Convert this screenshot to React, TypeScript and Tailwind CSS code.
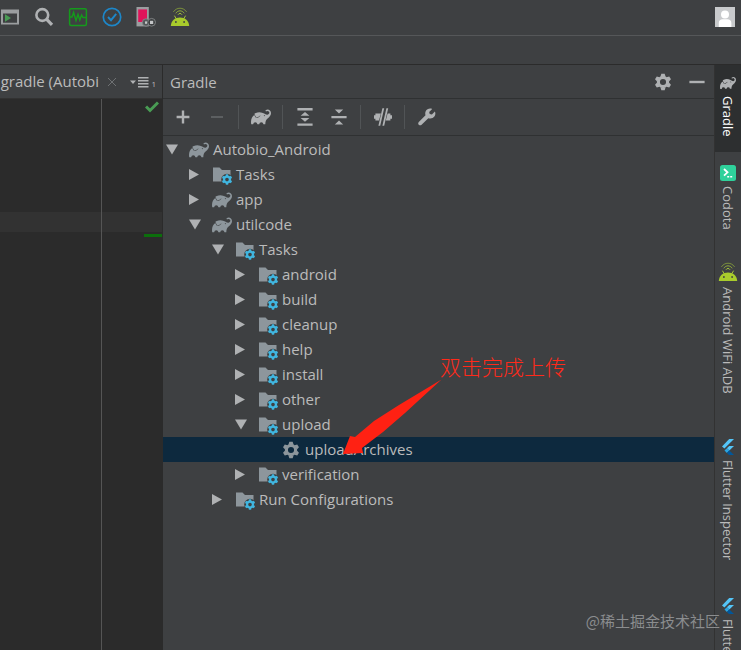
import type { ReactNode } from 'react'
import { SiGradle } from 'react-icons/si'

const TEETH = [0, 60, 120, 180, 240, 300]

function Cog({ className }: { className?: string }) {
  return (
    <svg viewBox="-10 -10 20 20" className={className} aria-hidden="true">
      <circle r="4.6" fill="none" stroke="currentColor" strokeWidth="3.1" />
      {TEETH.map((deg) => (
        <path key={deg} d="M-2.5 -5.4 L-1.7 -8.2 H1.7 L2.5 -5.4 Z" fill="currentColor" transform={`rotate(${deg})`} />
      ))}
    </svg>
  )
}

function TaskFolder() {
  return (
    <svg viewBox="0 0 20 20" className="size-5" aria-hidden="true">
      <path d="M1 2.5 H7.5 L10 5 H18.5 V16.5 H1 Z" fill="#8d969c" />
      <circle cx="15" cy="14.5" r="5.8" fill="#3e4042" />
      <g transform="translate(15 14.5)" fill="#40b6e0">
        <circle r="2.9" fill="none" stroke="#40b6e0" strokeWidth="2.2" />
        {TEETH.map((deg) => (
          <rect key={deg} x="-1.2" y="-5.2" width="2.4" height="2" transform={`rotate(${deg})`} />
        ))}
      </g>
    </svg>
  )
}

function AndroidWifi() {
  return (
    <svg viewBox="0 0 20 20" className="size-5" aria-hidden="true">
      <g fill="none" stroke="#a4c639" strokeWidth="1" strokeLinecap="round">
        <path d="M3.6 4.6 C6.5 0 13.5 0 16.4 4.6" strokeOpacity="0.6" />
        <path d="M6 6 C7.8 3 12.2 3 14 6" strokeOpacity="0.8" />
        <path d="M8.2 7.4 C9 6 11 6 11.8 7.4" />
        <path d="M4.6 9 L6.2 11.6 M15.4 9 L13.8 11.6" />
      </g>
      <path d="M0.8 19 C1 13.5 5 10.4 10 10.4 S19 13.5 19.2 19 Z" fill="#a9cc2c" />
      <circle cx="5.9" cy="15" r="0.9" fill="#3e4042" />
      <circle cx="14.1" cy="15" r="0.9" fill="#3e4042" />
    </svg>
  )
}

function FlutterLogo() {
  return (
    <svg viewBox="0 0 16 16" className="size-4" aria-hidden="true">
      <path d="M9.2 0 H14 L4.4 9.6 L2 7.4 Z" fill="#54c5f8" />
      <path d="M9.2 7 H14 L9.3 11.6 L6.9 9.3 Z" fill="#54c5f8" />
      <path d="M4.5 11.6 L6.9 9.3 L9.3 11.6 L6.9 14 Z" fill="#29a5e3" />
      <path d="M6.9 14 L9.3 11.6 L14 16 H9 Z" fill="#01579b" />
    </svg>
  )
}

function CodotaLogo() {
  return (
    <svg viewBox="0 0 16 16" className="size-4" aria-hidden="true">
      <rect width="16" height="16" rx="2.5" fill="#2fd19b" />
      <path d="M4 4 L7.5 7.3 L4 10.6" fill="none" stroke="#fff" strokeWidth="1.8" />
      <path d="M7.2 11.8 H9.2 M10.2 11.8 H12.2" stroke="#fff" strokeWidth="1.4" />
    </svg>
  )
}

function Elephant({ className }: { className?: string }) {
  return <SiGradle className={className} aria-hidden="true" />
}

function Twisty({ open }: { open: boolean }) {
  return (
    <svg viewBox="0 0 12 12" className="size-3" aria-hidden="true">
      <path d={open ? 'M0 0.5 H12 L6 10.5 Z' : 'M0 0 L10 5.5 L0 11 Z'} fill="#afb1b3" />
    </svg>
  )
}

const mainTools: { label: string; icon: ReactNode }[] = [
  {
    label: 'Run window',
    icon: (
      <svg viewBox="0 0 20 20" className="size-5">
        <path d="M1 2.5 H19 V17.5 H1 Z M3 6.5 V15.8 H17 V6.5 Z" fill="#9b9ea0" fillRule="evenodd" />
        <path d="M5 7.2 L11 11 L5 14.8 Z" fill="#499c54" />
      </svg>
    ),
  },
  {
    label: 'Search',
    icon: (
      <svg viewBox="0 0 20 20" className="size-5" fill="none" stroke="#afb1b3">
        <circle cx="8.3" cy="8" r="5.9" strokeWidth="2.6" />
        <path d="M12.5 12.2 L18 17.8" strokeWidth="3.2" />
      </svg>
    ),
  },
  {
    label: 'Monitor',
    icon: (
      <svg viewBox="0 0 20 20" className="size-5" fill="none" stroke="#159a1c">
        <rect x="1.6" y="1.8" width="16.8" height="16.6" rx="1.5" strokeWidth="1.5" />
        <path d="M2 10 H4 L5.6 5.5 L8 13.5 L10 7.5 L11.8 13 L13.6 8 L15 10.6 H18" strokeWidth="1.5" />
      </svg>
    ),
  },
  {
    label: 'Check',
    icon: (
      <svg viewBox="0 0 20 20" className="size-5" fill="none" stroke="#1d87c9">
        <circle cx="10" cy="10" r="8.7" strokeWidth="1.7" />
        <path d="M6 10 L9 13.2 L14.2 6.8" strokeWidth="1.9" />
      </svg>
    ),
  },
  {
    label: 'Device',
    icon: (
      <svg viewBox="0 0 20 20" className="size-5">
        <path d="M0.5 0 H12.8 V19.4 H0.5 Z" fill="#9b9ea0" />
        <path d="M2.2 2.4 H11 V15 H2.2 Z" fill="#e0145a" />
        <circle cx="10" cy="15.5" r="3.7" fill="#55585a" stroke="#8c8f91" strokeWidth="0.8" />
        <circle cx="15.6" cy="15.3" r="3.9" fill="#3e4042" stroke="#8c8f91" strokeWidth="0.8" />
        <rect x="14" y="13.8" width="3.2" height="3.2" fill="#c4c6c8" />
        <rect x="9" y="14.4" width="2" height="2.4" fill="#c4c6c8" />
      </svg>
    ),
  },
  { label: 'Android WiFi', icon: <AndroidWifi /> },
]

const gradleTools: { label: string; icon: ReactNode }[][] = [
  [
    {
      label: 'Add',
      icon: (
        <svg viewBox="0 0 20 20" className="size-5" stroke="#afb1b3" strokeWidth="2.4">
          <path d="M10 3.6 V16.4 M3.6 10 H16.4" />
        </svg>
      ),
    },
    {
      label: 'Remove',
      icon: (
        <svg viewBox="0 0 20 20" className="size-5" stroke="#5c5f61" strokeWidth="2">
          <path d="M4 10 H16" />
        </svg>
      ),
    },
  ],
  [{ label: 'Execute Gradle task', icon: <Elephant className="size-5 text-[#afb1b3]" /> }],
  [
    {
      label: 'Expand all',
      icon: (
        <svg viewBox="0 0 20 20" className="size-5" fill="#afb1b3">
          <path d="M2.4 1 H17.6 V3.4 H2.4 Z M2.4 16.4 H17.6 V18.8 H2.4 Z M5.6 8.8 L10 4.9 L14.4 8.8 Z M5.6 10.9 H14.4 L10 14.8 Z" />
        </svg>
      ),
    },
    {
      label: 'Collapse all',
      icon: (
        <svg viewBox="0 0 20 20" className="size-5" fill="#afb1b3">
          <path d="M2.4 8.9 H17.6 V11.3 H2.4 Z M5.8 2.4 H14.2 L10 6.6 Z M5.8 17.6 H14.2 L10 13.4 Z" />
        </svg>
      ),
    },
  ],
  [
    {
      label: 'Toggle offline mode',
      icon: (
        <svg viewBox="0 0 20 20" className="size-5" fill="#afb1b3">
          <path d="M1 8.2 H2.4 V6.6 H7.9 L6 13.4 H2.4 V11.8 H1 Z M14.6 6.6 H17.4 V8.2 H19 V11.8 H17.4 V13.4 H12.8 Z" />
          <path d="M9.4 1.2 H11.2 L7.2 18.8 H5.4 Z M13.4 1.2 H15.2 L11.2 18.8 H9.4 Z" />
        </svg>
      ),
    },
  ],
  [
    {
      label: 'Build tool settings',
      icon: (
        <svg viewBox="0 0 20 20" className="size-5" fill="#afb1b3">
          <path d="M17.9 4.6 L14.9 7.5 L12.7 7 L12.2 5 L15.2 2 C12.6 1 9.8 2 8.7 4.3 C8.1 5.6 8.1 6.9 8.5 8.2 L1.8 14.9 C1 15.8 1 16.9 1.8 17.7 C2.6 18.5 3.8 18.5 4.6 17.7 L11.3 11.2 C13.6 12 16 11.4 17.4 9.6 C18.5 8.2 18.7 6.3 17.9 4.6 Z" />
        </svg>
      ),
    },
  ],
]

type Node = { label: string; level: number; kind: 'project' | 'folder' | 'task'; open?: boolean }

const nodes: Node[] = [
  { label: 'Autobio_Android', level: 0, kind: 'project', open: true },
  { label: 'Tasks', level: 1, kind: 'folder' },
  { label: 'app', level: 1, kind: 'project' },
  { label: 'utilcode', level: 1, kind: 'project', open: true },
  { label: 'Tasks', level: 2, kind: 'folder', open: true },
  { label: 'android', level: 3, kind: 'folder' },
  { label: 'build', level: 3, kind: 'folder' },
  { label: 'cleanup', level: 3, kind: 'folder' },
  { label: 'help', level: 3, kind: 'folder' },
  { label: 'install', level: 3, kind: 'folder' },
  { label: 'other', level: 3, kind: 'folder' },
  { label: 'upload', level: 3, kind: 'folder', open: true },
  { label: 'uploadArchives', level: 4, kind: 'task' },
  { label: 'verification', level: 3, kind: 'folder' },
  { label: 'Run Configurations', level: 2, kind: 'folder' },
]

const indents = ['pl-[3px]', 'pl-[26px]', 'pl-[49px]', 'pl-[72px]', 'pl-[95px]']

function TreeRow({ node }: { node: Node }) {
  const selected = node.kind === 'task'
  return (
    <li
      role="treeitem"
      aria-level={node.level + 1}
      aria-expanded={selected ? undefined : !!node.open}
      aria-selected={selected}
      className={`flex h-[25px] items-center ${indents[node.level]} ${selected ? 'bg-[#0d293e]' : ''}`}
    >
      <span className="w-[23px]">{!selected && <Twisty open={!!node.open} />}</span>
      <span className="mr-1 flex w-5 justify-center">
        {node.kind === 'project' && <Elephant className="size-5 text-[#8d969c]" />}
        {node.kind === 'folder' && <TaskFolder />}
        {node.kind === 'task' && <Cog className="size-5 text-[#8d969c]" />}
      </span>
      <span className="pb-0.5 text-[15px] leading-5">{node.label}</span>
    </li>
  )
}

const stripes: { label: string; icon: ReactNode; box: string }[] = [
  {
    label: 'Gradle',
    icon: <Elephant className="size-4 text-[#afb1b3]" />,
    box: 'h-[87px] bg-[#2d2f30] pt-[10px] text-white',
  },
  { label: 'Codota', icon: <CodotaLogo />, box: 'h-[110px] pt-[13px]' },
  { label: 'Android WiFi ADB', icon: <AndroidWifi />, box: 'h-[166px] pt-0' },
  { label: 'Flutter Inspector', icon: <FlutterLogo />, box: 'h-[170px] pt-[11px]' },
  { label: 'Flutter Outline', icon: <FlutterLogo />, box: 'h-[170px] pt-0' },
]

export default function App() {
  return (
    <div className="relative flex h-screen flex-col overflow-hidden bg-[#3e4042] font-['Open_Sans','Noto_Sans_CJK_SC',sans-serif] text-[#bbbbbb]">
      <header className="flex h-9 shrink-0 items-start justify-between border-b border-[#555759] pt-[7px] pr-[6px]">
        <div className="flex gap-[14px]">
          {mainTools.map((tool) => (
            <button key={tool.label} type="button" aria-label={tool.label}>
              {tool.icon}
            </button>
          ))}
        </div>
        <button type="button" aria-label="Account">
          <svg viewBox="0 0 20 20" className="size-5">
            <rect width="20" height="20" fill="#c8cacc" />
            <circle cx="10" cy="7.4" r="4" fill="#fff" />
            <path d="M3.8 20 V16 C3.8 13.4 5.4 12.3 7.6 12.3 H12.4 C14.6 12.3 16.4 13.4 16.4 16 V20 Z" fill="#fff" />
          </svg>
        </button>
      </header>
      <div className="h-[29px] shrink-0 border-b border-[#2b2b2b]" />

      <div className="flex min-h-0 flex-1">
        <section className="flex w-[163px] shrink-0 flex-col border-r border-[#2b2b2b]">
          <div className="flex h-[34px] shrink-0 items-center border-b border-[#323232] pr-[6px]">
            <span className="flex w-[99px] justify-end overflow-hidden pb-0.5 text-[15px] leading-5 whitespace-nowrap">
              .gradle (Autobi
            </span>
            <button type="button" aria-label="Close tab" className="ml-2">
              <svg viewBox="0 0 10 10" className="size-[10px]" stroke="#6e7173">
                <path d="M1 1 L9 9 M9 1 L1 9" />
              </svg>
            </button>
            <button type="button" aria-label="Hidden tabs" className="ml-auto flex items-center">
              <svg viewBox="0 0 19 12" className="h-3 w-[19px]" fill="#afb1b3">
                <path d="M0 4.5 H6 L3 8 Z M8 1 H18.5 V2.6 H8 Z M8 4 H18.5 V5.6 H8 Z M8 7 H18.5 V8.6 H8 Z M8 10 H18.5 V11.6 H8 Z" />
              </svg>
              <span className="mt-1 ml-0.5 text-[8px] leading-3">1</span>
            </button>
          </div>
          <div className="flex flex-1 bg-[#2b2b2b]">
            <div className="w-[102px] border-r border-[#555555] pt-[113px]">
              <div className="h-5 bg-[#323232]" />
            </div>
            <div className="flex-1">
              <div className="flex h-[113px] justify-end pt-[2px] pr-[3px]">
                <svg viewBox="0 0 14 12" className="h-3 w-[14px]" fill="none" stroke="#499c54" strokeWidth="3">
                  <path d="M1 5.5 L5 9.5 L13 1.5" />
                </svg>
              </div>
              <div className="h-5 bg-[#323232]" />
              <div className="mt-0.5 ml-auto h-[3px] w-[18px] bg-[#0b6e0b]" />
            </div>
          </div>
        </section>

        <main className="flex min-w-0 flex-1 flex-col border-r border-[#323232]">
          <div className="flex h-[34px] shrink-0 items-center border-b border-[#2f3132] pr-[7px] pl-[7px]">
            <h1 className="flex-1 text-[15px] leading-5">Gradle</h1>
            <div className="flex gap-[14px] text-[#afb1b3]">
              <button type="button" aria-label="Settings">
                <Cog className="size-5" />
              </button>
              <button type="button" aria-label="Hide">
                <svg viewBox="0 0 20 20" className="size-5" stroke="currentColor" strokeWidth="2.4">
                  <path d="M2.4 10 H17.6" />
                </svg>
              </button>
            </div>
          </div>

          <div className="flex h-[37px] shrink-0 items-center border-b border-[#2f3132] pl-[10px]">
            {gradleTools.map((group, i) => (
              <div
                key={i}
                className={`flex h-6 items-center gap-[14px] ${i > 0 ? 'ml-[11px] border-l border-[#515456] pl-3' : ''}`}
              >
                {group.map((tool) => (
                  <button key={tool.label} type="button" aria-label={tool.label}>
                    {tool.icon}
                  </button>
                ))}
              </div>
            ))}
          </div>

          <div className="relative flex-1 pt-px">
            <ul role="tree" aria-label="Gradle projects">
              {nodes.map((node, i) => (
                <TreeRow key={i} node={node} />
              ))}
            </ul>

            {/* callout pointing at the upload task */}
            <p className="absolute top-[216px] left-[277px] font-['Noto_Sans_CJK_SC',sans-serif] text-[21px] leading-7 font-light whitespace-nowrap text-[#ff2a1a]">
              双击完成上传
            </p>
            <svg viewBox="0 0 102 78" className="absolute top-[242px] left-[179px] h-[78px] w-[102px]" aria-hidden="true">
              <path d="M99.5 1.5 L57 27 L32 43 L13 59 L8 58 L1 76 L21 75 L20 70 L41 54 L63 35 Z" fill="#ff2113" />
            </svg>
          </div>
        </main>

        <aside className="flex w-[26px] shrink-0 flex-col overflow-hidden">
          {stripes.map((s) => (
            <button
              key={s.label}
              type="button"
              className={`flex w-full shrink-0 flex-col items-center gap-[5px] text-[13px] leading-5 ${s.box}`}
            >
              {s.icon}
              <span className="whitespace-nowrap [writing-mode:vertical-rl]">{s.label}</span>
            </button>
          ))}
        </aside>
      </div>

      <p className="pointer-events-none absolute right-[21px] bottom-[17px] font-['Noto_Sans_CJK_SC',sans-serif] text-[15px] leading-6 text-[#8b8d8f]">
        @稀土掘金技术社区
      </p>
    </div>
  )
}
